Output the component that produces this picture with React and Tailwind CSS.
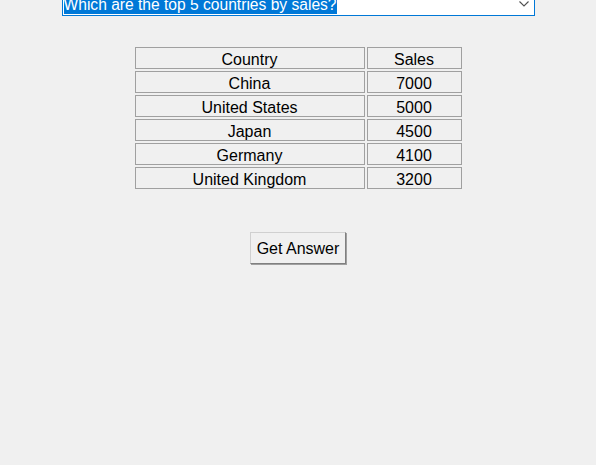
import React from "react";

const rows = [
  ["China", "7000"],
  ["United States", "5000"],
  ["Japan", "4500"],
  ["Germany", "4100"],
  ["United Kingdom", "3200"],
];

export default function App() {
  return (
    <div
      className="min-h-[465px] w-full bg-[#f0f0f0] flex flex-col items-center text-black"
      style={{ fontFamily: '"Liberation Sans", Arial, sans-serif' }}
    >
      <div className="mt-[-6px] w-[473px] h-[22px] border border-[#0078d7] bg-white flex items-center p-px">
        <div className="flex-1 h-full flex items-center">
          <span className="bg-[#0078d7] text-white text-[15.6px] leading-[18px] h-[18px] whitespace-nowrap">
            Which are the top 5 countries by sales?
          </span>
        </div>
        <svg width="10" height="6" viewBox="0 0 10 6" className="mr-[4px] mt-[-2px]">
          <path d="M0.5 0.5 L5 5 L9.5 0.5" fill="none" stroke="#505050" strokeWidth="1.1" />
        </svg>
      </div>

      <table className="mt-[29px] border-separate border-spacing-[2px] text-[16px]">
        <thead>
          <tr>
            <th className="w-[230px] h-[22px] p-0 pt-[4px] border border-[#a0a0a0] font-normal text-center leading-[16px]">
              Country
            </th>
            <th className="w-[95px] h-[22px] p-0 pt-[4px] border border-[#a0a0a0] font-normal text-center leading-[16px]">
              Sales
            </th>
          </tr>
        </thead>
        <tbody>
          {rows.map(([c, s]) => (
            <tr key={c}>
              <td className="w-[230px] h-[22px] p-0 pt-[4px] border border-[#a0a0a0] text-center leading-[16px]">
                {c}
              </td>
              <td className="w-[95px] h-[22px] p-0 pt-[4px] border border-[#a0a0a0] text-center leading-[16px]">
                {s}
              </td>
            </tr>
          ))}
        </tbody>
      </table>

      <button className="mt-[41px] w-[96px] h-[32px] pt-[2px] bg-[#f0f0f0] border border-t-[#d0d0d0] border-l-[#d0d0d0] border-r-[#808080] border-b-[#808080] shadow-[1px_1px_0_#a0a0a0] text-[16px] leading-none text-black">
        Get Answer
      </button>
    </div>
  );
}
